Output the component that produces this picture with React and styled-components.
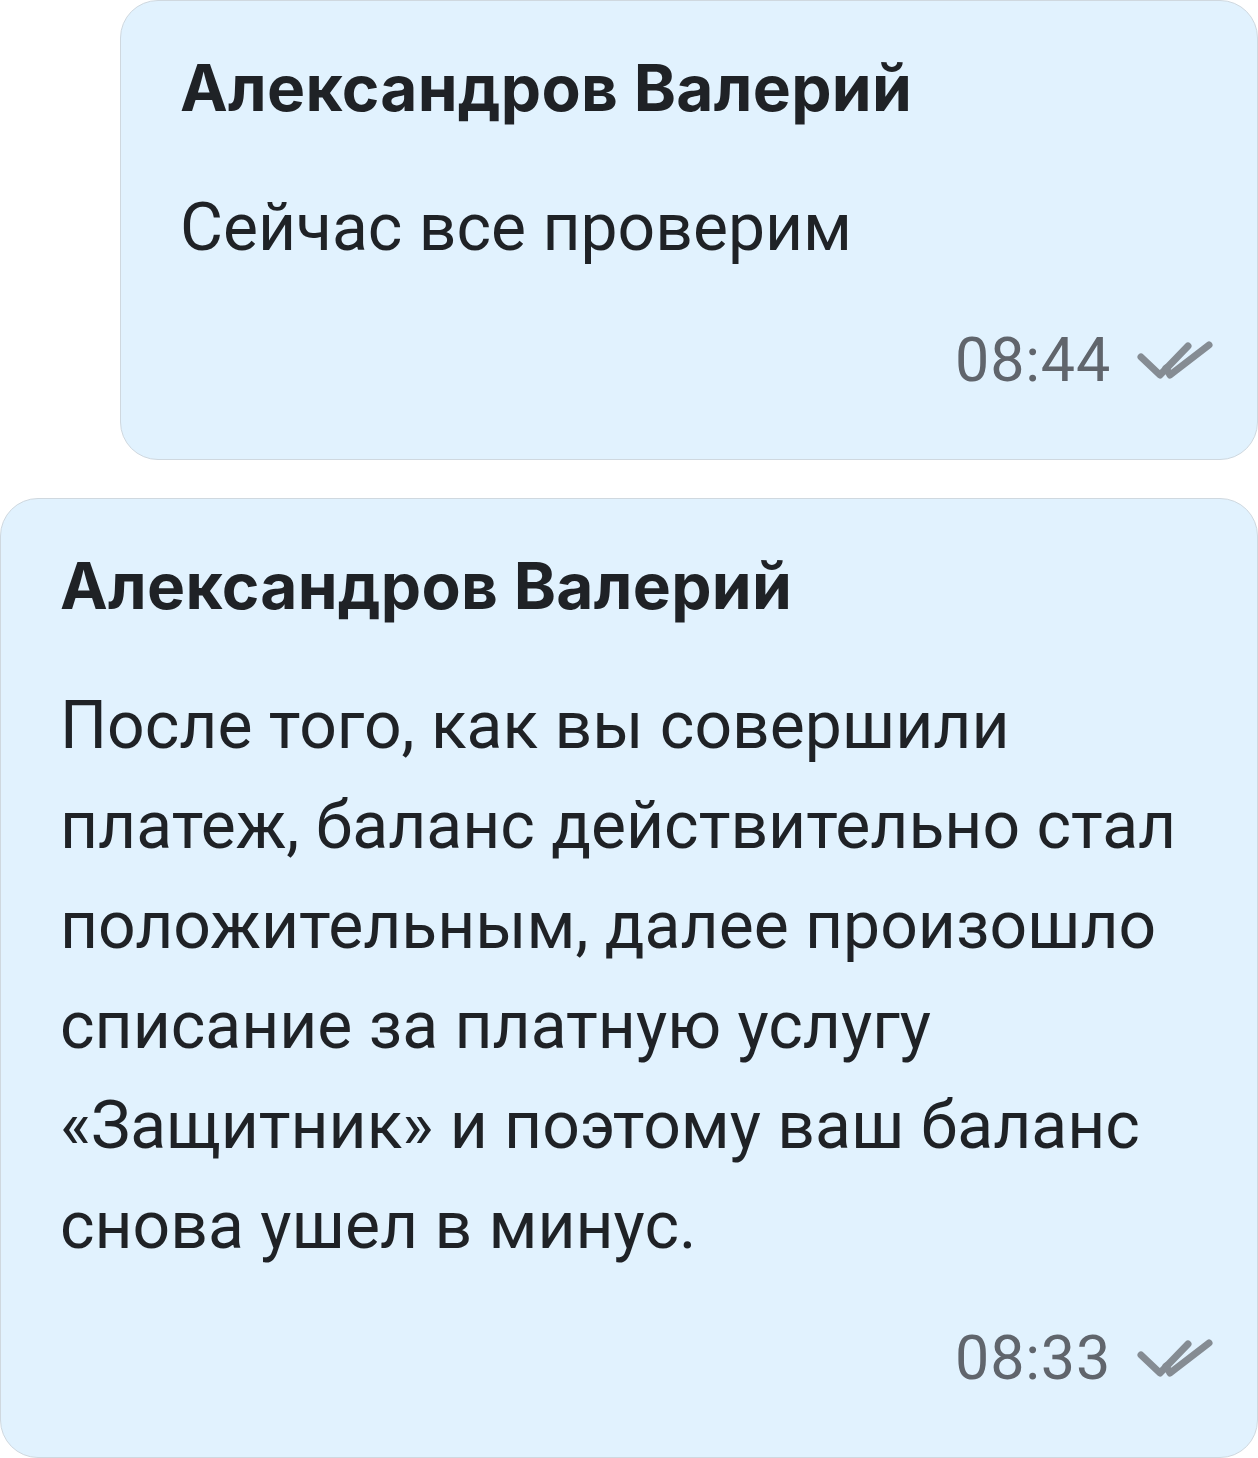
import styled, {createGlobalStyle} from 'styled-components'

const GlobalStyle = createGlobalStyle`
	body {
		margin: 0;
		background: #ffffff;
		font-family: Roboto, "Noto Sans", sans-serif;
	}
`

const Feed = styled.div`
	width: 1258px;
	display: flex;
	flex-direction: column;
	gap: 38px;
`

const Bubble = styled.div`
	margin-left: ${(props)=>props.indent || 0}px;
	padding: 47px 44px 69px 59px;
	background-color: #e1f2fe;
	border: 1px solid #cfd8df;
	border-radius: 38px;
`

const Author = styled.div`
	font-family: Inter, Roboto, sans-serif;
	font-size: 64px;
	line-height: 80px;
	font-weight: 700;
	letter-spacing: 0.3px;
	color: #1f2226;
`

const Body = styled.div`
	margin-top: 50px;
	font-size: 66px;
	line-height: 100px;
	color: #1f2226;
	white-space: nowrap;
`

const Meta = styled.div`
	margin-top: 52px;
	display: flex;
	justify-content: flex-end;
	align-items: center;
	gap: 26px;
`

const Time = styled.span`
	font-size: 61px;
	line-height: 60px;
	letter-spacing: 0.8px;
	color: #60656c;
`

const Checks = () => (
	<svg width="76" height="40" viewBox="0 0 76 40" fill="none" stroke="#858c93" strokeWidth="7" strokeLinecap="round" strokeLinejoin="round">
		<path d="M4 17 L23 35 L51 6"/>
		<path d="M29 28 L33 35 L72 5"/>
	</svg>
)

const messages = [
	{
		id: 1,
		indent: 120,
		author: 'Александров Валерий',
		lines: ['Сейчас все проверим'],
		time: '08:44',
	},
	{
		id: 2,
		indent: 0,
		author: 'Александров Валерий',
		lines: [
			'После того, как вы совершили',
			'платеж, баланс действительно стал',
			'положительным, далее произошло',
			'списание за платную услугу',
			'«Защитник» и поэтому ваш баланс',
			'снова ушел в минус.',
		],
		time: '08:33',
	},
]

const App = () => {
	return (
		<Feed>
			<GlobalStyle />
			{messages.map((msg)=>(
				<Bubble key={msg.id} indent={msg.indent}>
					<Author>{msg.author}</Author>
					<Body>
						{msg.lines.map((line, i)=>(
							<div key={i}>{line}</div>
						))}
					</Body>
					<Meta>
						<Time>{msg.time}</Time>
						<Checks />
					</Meta>
				</Bubble>
			))}
		</Feed>
	)
}
export default App
